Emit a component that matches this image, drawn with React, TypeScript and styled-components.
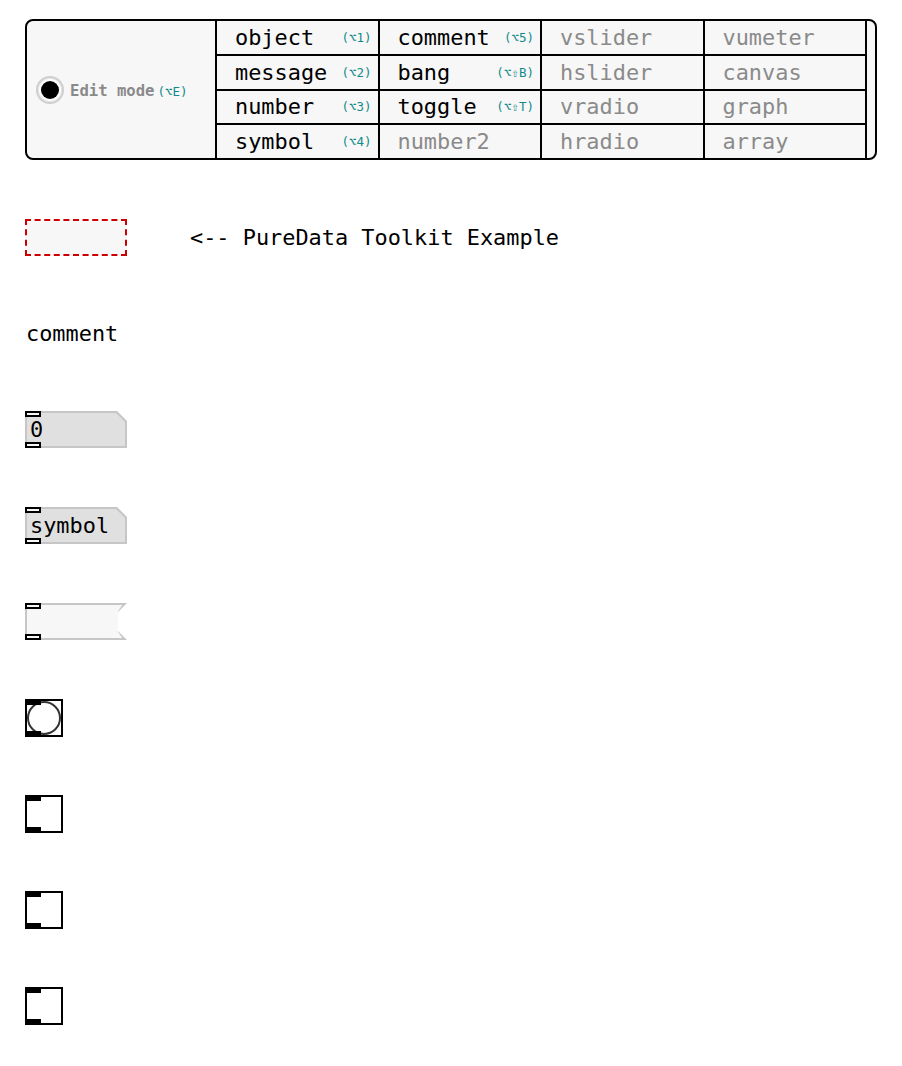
import styled, { createGlobalStyle } from "styled-components";

const GlobalStyle = createGlobalStyle`
  body {
    margin: 0;
    background: #fff;
  }
  * {
    box-sizing: border-box;
  }
`;

const MONO = `"DejaVu Sans Mono", "Liberation Mono", monospace`;

const Page = styled.div`
  padding: 19px 0 20px 25px;
  font-family: ${MONO};
  color: #000;
`;

/* ---------- toolbar ---------- */

const Toolbar = styled.div`
  display: flex;
  width: 852px;
  height: 141px;
  border: 2px solid #000;
  border-radius: 8px;
  background: #f7f7f7;
`;

const EditPanel = styled.div`
  width: 188px;
  display: flex;
  align-items: center;
  padding-left: 9px;
`;

const EditDot = styled.span`
  width: 28px;
  height: 28px;
  border-radius: 50%;
  border: 2px solid #cfcfcf;
  background: #fff;
  box-shadow: inset 0 0 0 1px #e4e4e4;
  display: flex;
  align-items: center;
  justify-content: center;
  margin-right: 6px;

  &::after {
    content: "";
    width: 18px;
    height: 18px;
    border-radius: 50%;
    background: #000;
  }
`;

const EditLabel = styled.span`
  display: flex;
  align-items: baseline;
  gap: 3px;
  padding-top: 2px;
`;

const EditText = styled.span`
  font-size: 15.6px;
  font-weight: 700;
  color: #8a8a8a;
`;

const Shortcut = styled.span`
  font-size: 12.5px;
  color: #128a8a;
  white-space: nowrap;
`;

const Grid = styled.div`
  display: grid;
  grid-template-columns: repeat(4, 160.5px);
  grid-template-rows: repeat(4, 1fr);
  gap: 2px;
  background: #000;
  border-left: 2px solid #000;
  border-right: 2px solid #000;
`;

const Cell = styled.div<{ $muted?: boolean }>`
  display: flex;
  align-items: center;
  justify-content: space-between;
  padding: 0 6px 0 18px;
  background: #f7f7f7;
  font-size: 21.9px;
  color: ${(p) => (p.$muted ? "#8a8a8a" : "#000")};
`;

/* ---------- canvas ---------- */

const Canvas = styled.div`
  display: flex;
  flex-direction: column;
  margin-top: 59px;
`;

const Slot = styled.div`
  height: 96px;
  display: flex;
  align-items: flex-start;

  &:last-child {
    height: auto;
  }
`;

const NewObject = styled.div`
  width: 102px;
  height: 37px;
  border: 2px dashed #cc0000;
  background: #f7f7f7;
`;

const Note = styled.div<{ $indent?: number }>`
  height: 37px;
  line-height: 37px;
  font-size: 21.9px;
  margin-left: ${(p) => p.$indent ?? 1}px;
`;

const Atom = styled.div`
  position: relative;
  width: 102px;
  height: 37px;
`;

const cutCorner = {
  outer: "polygon(0 0, calc(100% - 10px) 0, 100% 10px, 100% 100%, 0 100%)",
  inner: "polygon(0 0, calc(100% - 9px) 0, 100% 9px, 100% 100%, 0 100%)",
};

const flag = {
  outer:
    "polygon(0 0, 100% 0, calc(100% - 9px) 9px, calc(100% - 9px) calc(100% - 9px), 100% 100%, 0 100%)",
  inner:
    "polygon(0 0, calc(100% - 2.8px) 0, calc(100% - 7px) 6.2px, calc(100% - 7px) calc(100% - 6.2px), calc(100% - 2.8px) 100%, 0 100%)",
};

const AtomEdge = styled.div<{ $clip: string }>`
  width: 100%;
  height: 100%;
  padding: 2px;
  background: #c6c6c6;
  clip-path: ${(p) => p.$clip};
`;

const AtomFill = styled.div<{ $clip: string; $bg: string }>`
  height: 100%;
  display: flex;
  align-items: center;
  padding-left: 3px;
  font-size: 21.9px;
  background: ${(p) => p.$bg};
  clip-path: ${(p) => p.$clip};
`;

const Port = styled.span<{ $at: "top" | "bottom" }>`
  position: absolute;
  left: 0;
  ${(p) => (p.$at === "top" ? "top: 0;" : "bottom: 0;")}
  width: 16px;
  height: 6px;
  border: 2px solid #000;
  background: #f7f7f7;
`;

const Gui = styled.div`
  position: relative;
  width: 38px;
  height: 38px;
  border: 2px solid #000;
  background: #fff;

  &::before,
  &::after {
    content: "";
    position: absolute;
    left: -2px;
    width: 16px;
    height: 6px;
    background: #000;
    z-index: 1;
  }
  &::before {
    top: -2px;
  }
  &::after {
    bottom: -2px;
  }
`;

const BangCircle = styled.div`
  width: 100%;
  height: 100%;
  border-radius: 50%;
  border: 2px solid #333;
`;

type Tool = { label: string; key?: string; muted?: boolean };

const tools: Tool[] = [
  { label: "object", key: "(⌥1)" },
  { label: "comment", key: "(⌥5)" },
  { label: "vslider", muted: true },
  { label: "vumeter", muted: true },
  { label: "message", key: "(⌥2)" },
  { label: "bang", key: "(⌥⇧B)" },
  { label: "hslider", muted: true },
  { label: "canvas", muted: true },
  { label: "number", key: "(⌥3)" },
  { label: "toggle", key: "(⌥⇧T)" },
  { label: "vradio", muted: true },
  { label: "graph", muted: true },
  { label: "symbol", key: "(⌥4)" },
  { label: "number2", muted: true },
  { label: "hradio", muted: true },
  { label: "array", muted: true },
];

const AtomBox = ({
  shape,
  bg,
  children,
}: {
  shape: { outer: string; inner: string };
  bg: string;
  children?: React.ReactNode;
}) => (
  <Atom>
    <AtomEdge $clip={shape.outer}>
      <AtomFill $clip={shape.inner} $bg={bg}>
        {children}
      </AtomFill>
    </AtomEdge>
    <Port $at="top" />
    <Port $at="bottom" />
  </Atom>
);

export default function App() {
  return (
    <Page>
      <GlobalStyle />
      <Toolbar>
        <EditPanel>
          <EditDot />
          <EditLabel>
            <EditText>Edit mode</EditText>
            <Shortcut>(⌥E)</Shortcut>
          </EditLabel>
        </EditPanel>
        <Grid>
          {tools.map((t) => (
            <Cell key={t.label} $muted={t.muted}>
              <span>{t.label}</span>
              {t.key && <Shortcut>{t.key}</Shortcut>}
            </Cell>
          ))}
        </Grid>
      </Toolbar>

      <Canvas>
        <Slot>
          <NewObject />
          <Note $indent={63}>&lt;-- PureData Toolkit Example</Note>
        </Slot>
        <Slot>
          <Note>comment</Note>
        </Slot>
        <Slot>
          <AtomBox shape={cutCorner} bg="#e0e0e0">
            0
          </AtomBox>
        </Slot>
        <Slot>
          <AtomBox shape={cutCorner} bg="#e0e0e0">
            symbol
          </AtomBox>
        </Slot>
        <Slot>
          <AtomBox shape={flag} bg="#f7f7f7" />
        </Slot>
        <Slot>
          <Gui>
            <BangCircle />
          </Gui>
        </Slot>
        <Slot>
          <Gui />
        </Slot>
        <Slot>
          <Gui />
        </Slot>
        <Slot>
          <Gui />
        </Slot>
      </Canvas>
    </Page>
  );
}
